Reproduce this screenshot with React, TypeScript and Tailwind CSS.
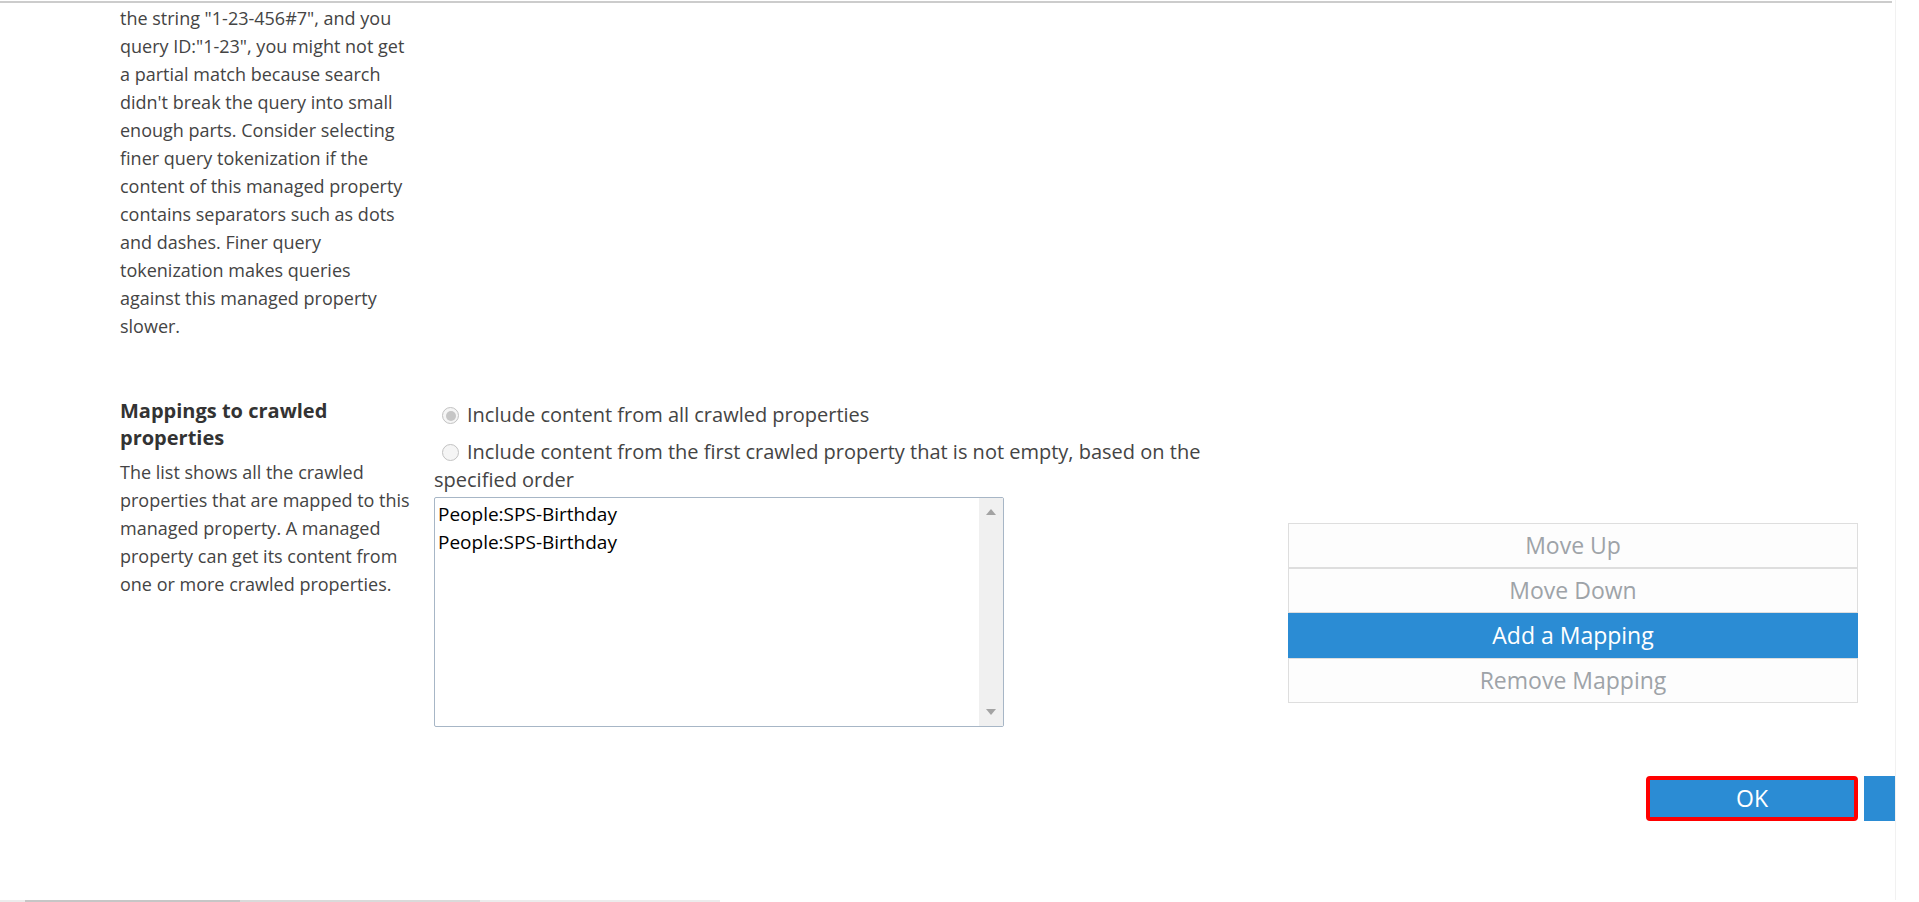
import React from "react";

const TOKENIZE_NOTE = [
  'the string "1-23-456#7", and you',
  'query ID:"1-23", you might not get',
  "a partial match because search",
  "didn't break the query into small",
  "enough parts. Consider selecting",
  "finer query tokenization if the",
  "content of this managed property",
  "contains separators such as dots",
  "and dashes. Finer query",
  "tokenization makes queries",
  "against this managed property",
  "slower.",
];

const MAPPINGS_NOTE = [
  "The list shows all the crawled",
  "properties that are mapped to this",
  "managed property. A managed",
  "property can get its content from",
  "one or more crawled properties.",
];

const CRAWLED = ["People:SPS-Birthday", "People:SPS-Birthday"];

function Radio({ checked }: { checked?: boolean }) {
  return (
    <span className="relative mx-[8px] inline-flex h-[17px] w-[17px] -translate-y-[1px] items-center justify-center rounded-full border border-[#c2c2c2] bg-[#f5f5f5] align-middle">
      {checked && <span className="h-[10px] w-[10px] rounded-full bg-[#c6c6c6]" />}
    </span>
  );
}

function SideButton({ label, active }: { label: string; active?: boolean }) {
  if (active) {
    return (
      <div className="flex h-[45px] items-center justify-center border border-[#2b8cd4] bg-[#2b8cd4] text-[23px] text-white">
        {label}
      </div>
    );
  }
  return (
    <div className="flex h-[45px] items-center justify-center border border-[#dedede] bg-[#fdfdfd] text-[23px] text-[#9ea3a8]">
      {label}
    </div>
  );
}

export default function App() {
  return (
    <div className="flex h-[902px] w-full flex-col overflow-hidden bg-white font-['Open_Sans',sans-serif]">
      <div className="flex min-h-0 flex-1">
        <div className="w-[1896px] shrink-0 overflow-hidden border-r border-[#f1f1f1]">
          <div className="mt-px h-[2px] w-[1892px] bg-[#cccccc]" />

          <div className="grid grid-cols-[314px_1fr] pl-[120px] pt-px">
            {/* tokenization note (scrolled) */}
            <div className="text-[18px] leading-[28px] text-[#444]">
              {TOKENIZE_NOTE.map((line, i) => (
                <div key={i} className="whitespace-nowrap">
                  {line}
                </div>
              ))}
            </div>
            <div />

            {/* mappings */}
            <div className="mt-[57px]">
              <div className="text-[20px] font-bold leading-[27px] text-[#333]">
                <div className="whitespace-nowrap">Mappings to crawled</div>
                <div>properties</div>
              </div>
              <div className="mt-[7px] text-[18px] leading-[28px] text-[#444]">
                {MAPPINGS_NOTE.map((line, i) => (
                  <div key={i} className="whitespace-nowrap">
                    {line}
                  </div>
                ))}
              </div>
            </div>

            <div className="mt-[57px] w-[1424px] pt-[4px]">
              <div className="text-[20px] leading-[28px] text-[#444]">
                <div className="whitespace-nowrap">
                  <Radio checked />
                  Include content from all crawled properties
                </div>
                <div className="mt-[9px]">
                  <span className="whitespace-nowrap">
                    <Radio />
                    Include content from the first crawled property that is not empty, based on the
                  </span>
                  <br />
                  specified order
                </div>
              </div>

              <div className="mt-[3px] flex items-start justify-between">
                <div className="flex h-[230px] w-[570px] rounded-[2px] border border-[#a7b6c6]">
                  <div className="flex-1 pl-[3px] pt-[2px] text-[19px] leading-[28px] text-black">
                    {CRAWLED.map((c, i) => (
                      <div key={i}>{c}</div>
                    ))}
                  </div>
                  <div className="flex w-[24px] flex-col items-center justify-between bg-[#f0f0f0] py-[11px]">
                    <span className="h-0 w-0 border-x-[5px] border-b-[6px] border-x-transparent border-b-[#a3a3a3]" />
                    <span className="h-0 w-0 border-x-[5px] border-t-[6px] border-x-transparent border-t-[#a3a3a3]" />
                  </div>
                </div>

                <div className="mt-[26px] flex w-[570px] flex-col">
                  <SideButton label="Move Up" />
                  <SideButton label="Move Down" />
                  <SideButton label="Add a Mapping" active />
                  <SideButton label="Remove Mapping" />
                </div>
              </div>

              <div className="mt-[49px] flex justify-end">
                <button className="flex h-[45px] w-[212px] items-center justify-center rounded-[4px] border-[4px] border-[#ff0000] bg-[#2b8cd4] text-[23px] text-white">
                  OK
                </button>
                <button
                  aria-label="Cancel"
                  className="-mr-[218px] ml-[6px] h-[45px] w-[212px] shrink-0 bg-[#2b8cd4]"
                />
              </div>
            </div>
          </div>
        </div>
      </div>

      <div className="flex h-[2px] w-[720px] bg-[#ececec]">
        <div className="ml-[25px] w-[215px] bg-[#c6c6c6]" />
        <div className="w-[240px] bg-[#dadada]" />
      </div>
    </div>
  );
}
